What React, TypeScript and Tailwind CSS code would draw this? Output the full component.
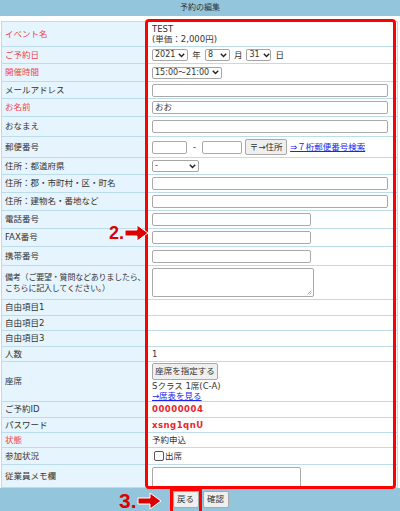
import React from 'react';

const FONT = "font-['DejaVu_Sans','Noto_Sans_CJK_JP',sans-serif]";

function Chevron() {
  return (
    <svg width="7" height="5" viewBox="0 0 7 5" className="ml-auto shrink-0">
      <path d="M0.8 0.8 L3.5 3.6 L6.2 0.8" fill="none" stroke="#222" strokeWidth="1.4" />
    </svg>
  );
}

function Select({ value, w = '' }: { value: string; w?: string }) {
  return (
    <div
      className={`flex h-[12px] shrink-0 items-center gap-[3px] whitespace-nowrap rounded-[2px] border border-[#a5a5a5] bg-white pl-[2px] pr-[2px] text-[8px] ${w}`}
    >
      <span>{value}</span>
      <Chevron />
    </div>
  );
}

function Input({ w, value = '' }: { w: string; value?: string }) {
  return (
    <div className={`flex h-[13px] shrink-0 items-center rounded-[2px] border border-[#a9a9a9] bg-white px-[2px] ${w}`}>
      {value}
    </div>
  );
}

type Row = { label: React.ReactNode; red?: boolean; h: string; body?: React.ReactNode; top?: boolean };

const rows: Row[] = [
  {
    label: 'イベント名',
    red: true,
    h: 'h-[26px]',
    top: true,
    body: (
      <div className="leading-[10px]">
        <div>TEST</div>
        <div>(単価：2,000円)</div>
      </div>
    ),
  },
  {
    label: 'ご予約日',
    red: true,
    h: 'h-[17px]',
    body: (
      <div className="flex items-center">
        <Select value="2021" />
        <span className="mx-[4px]">年</span>
        <Select value="8" w="w-[25px]" />
        <span className="mx-[4px]">月</span>
        <Select value="31" w="w-[25px]" />
        <span className="ml-[4px]">日</span>
      </div>
    ),
  },
  { label: '開催時間', red: true, h: 'h-[18px]', body: <Select value="15:00～21:00" /> },
  { label: 'メールアドレス', h: 'h-[17px]', body: <Input w="w-[236px]" /> },
  { label: 'お名前', red: true, h: 'h-[18px]', body: <Input w="w-[236px]" value="おお" /> },
  { label: 'おなまえ', h: 'h-[20px]', body: <Input w="w-[236px]" /> },
  {
    label: '郵便番号',
    h: 'h-[21px]',
    body: (
      <div className="flex items-center whitespace-nowrap">
        <Input w="w-[35px]" />
        <span className="mx-[6px]">-</span>
        <Input w="w-[40px]" />
        <div className="ml-[3px] flex h-[16px] w-[42px] items-center justify-center rounded-[2px] border border-[#a9a9a9] bg-[#efefef] text-[#333]">
          〒→住所
        </div>
        <span className="ml-[3px] text-[#2222ee] underline">⇒７桁郵便番号検索</span>
      </div>
    ),
  },
  { label: '住所：都道府県', h: 'h-[17px]', body: <Select value="-" w="w-[47px]" /> },
  { label: '住所：郡・市町村・区・町名', h: 'h-[18px]', body: <Input w="w-[236px]" /> },
  { label: '住所：建物名・番地など', h: 'h-[18px]', body: <Input w="w-[236px]" /> },
  { label: '電話番号', h: 'h-[18px]', body: <Input w="w-[159px]" /> },
  { label: 'FAX番号', h: 'h-[18px]', body: <Input w="w-[159px]" /> },
  { label: '携帯番号', h: 'h-[19px]', body: <Input w="w-[159px]" /> },
  {
    label: (
      <span className="whitespace-nowrap text-[8px] leading-[11px] tracking-[-0.2px]">
        備考（ご要望・質問などありましたら、
        <br />
        こちらに記入してください。）
      </span>
    ),
    h: 'h-[34px]',
    body: (
      <div className="relative h-[29px] w-[162px] rounded-[2px] border border-[#a9a9a9] bg-white">
        <svg width="5" height="5" viewBox="0 0 5 5" className="absolute bottom-[1px] right-[1px]">
          <path d="M0.5 4.5 L4.5 0.5 M2.5 4.5 L4.5 2.5" stroke="#999" strokeWidth="0.8" />
        </svg>
      </div>
    ),
  },
  { label: '自由項目1', h: 'h-[16px]' },
  { label: '自由項目2', h: 'h-[15px]' },
  { label: '自由項目3', h: 'h-[16px]' },
  { label: '人数', h: 'h-[15px]', body: <span>1</span> },
  {
    label: '座席',
    h: 'h-[40px]',
    body: (
      <div className="flex flex-col items-start leading-[10px]">
        <div className="flex h-[17px] w-[66px] items-center justify-center rounded-[2px] border border-[#a9a9a9] bg-[#efefef] text-[#333]">
          座席を指定する
        </div>
        <div className="mt-[1px]">Sクラス 1席(C-A)</div>
        <div className="text-[#2222ee] underline">→席表を見る</div>
      </div>
    ),
  },
  {
    label: 'ご予約ID',
    h: 'h-[16px]',
    body: <span className="font-bold tracking-[0.5px] text-[#e8262c]">00000004</span>,
  },
  {
    label: 'パスワード',
    h: 'h-[15px]',
    body: <span className="font-bold tracking-[0.5px] text-[#e8262c]">xsng1qnU</span>,
  },
  { label: '状態', red: true, h: 'h-[15px]', body: <span>予約申込</span> },
  {
    label: '参加状況',
    h: 'h-[17px]',
    body: (
      <div className="ml-[2px] flex items-center">
        <div className="h-[10px] w-[10px] rounded-[2px] border border-[#555] bg-white" />
        <span className="ml-[1px]">出席</span>
      </div>
    ),
  },
  {
    label: '従業員メモ欄',
    h: 'h-[23px]',
    body: <div className="mt-[2px] h-[21px] w-[149px] self-start rounded-[2px] border border-[#a9a9a9] bg-white" />,
  },
];

function Arrow() {
  return (
    <svg width="26" height="18" viewBox="0 0 26 18">
      <path
        d="M1 6 H13 V1 L24 9 L13 17 V12 H1 Z"
        fill="#dd0000"
        stroke="#fff"
        strokeWidth="1"
        strokeLinejoin="miter"
      />
    </svg>
  );
}

export default function App() {
  return (
    <div className={`relative h-[511px] w-[400px] overflow-hidden bg-white text-[8.5px] text-[#333] ${FONT}`}>
      {/* Header */}
      <div className="flex h-[16px] items-center justify-center bg-[#93c6dd] text-[8px] text-[#333]">
        予約の編集
      </div>

      {/* Table */}
      <div className="mx-[1px] mt-[5px] w-[397px]">
        {rows.map((r, i) => (
          <div key={i} className={`flex ${r.h}`}>
            <div
              className={`flex w-[144px] shrink-0 items-center overflow-hidden border-b border-l border-[#bcdcec] bg-[#e6f5fd] pl-[3px] ${
                r.top ? 'border-t' : ''
              } ${r.red ? 'text-[#f0444c]' : 'text-[#333]'}`}
            >
              {r.label}
            </div>
            <div
              className={`ml-px flex flex-1 items-center border-b border-r border-[#bcdcec] bg-white pl-[6px] ${
                r.top ? 'border-t' : ''
              }`}
            >
              {r.body}
            </div>
          </div>
        ))}
      </div>

      {/* Footer */}
      <div className="flex h-[23px] items-center justify-center gap-[4px] bg-[#93c6dd] pl-[1px]">
        <div className="flex h-[17px] w-[26px] items-center justify-center rounded-[2px] border border-[#a9a9a9] bg-[#efefef]">
          戻る
        </div>
        <div className="flex h-[17px] w-[26px] items-center justify-center rounded-[2px] border border-[#a9a9a9] bg-[#efefef]">
          確認
        </div>
      </div>

      {/* Annotations */}
      <div className="absolute left-[145px] top-[19px] h-[470px] w-[251px] rounded-[4px] border-[3px] border-[#ff0000]" />
      <div className="absolute left-[170px] top-[488px] h-[26px] w-[32px] border-[3px] border-[#ff0000]" />

      <div className="absolute left-[109px] top-[224px] flex items-center">
        <span className="font-['Liberation_Sans',sans-serif] text-[18px] font-bold leading-[18px] text-[#dd0000]">2.</span>
        <Arrow />
      </div>
      <div className="absolute left-[119px] top-[491px] flex items-center">
        <span className="font-['Liberation_Sans',sans-serif] text-[21px] font-bold leading-[20px] text-[#dd0000]">3.</span>
        <Arrow />
      </div>
    </div>
  );
}
